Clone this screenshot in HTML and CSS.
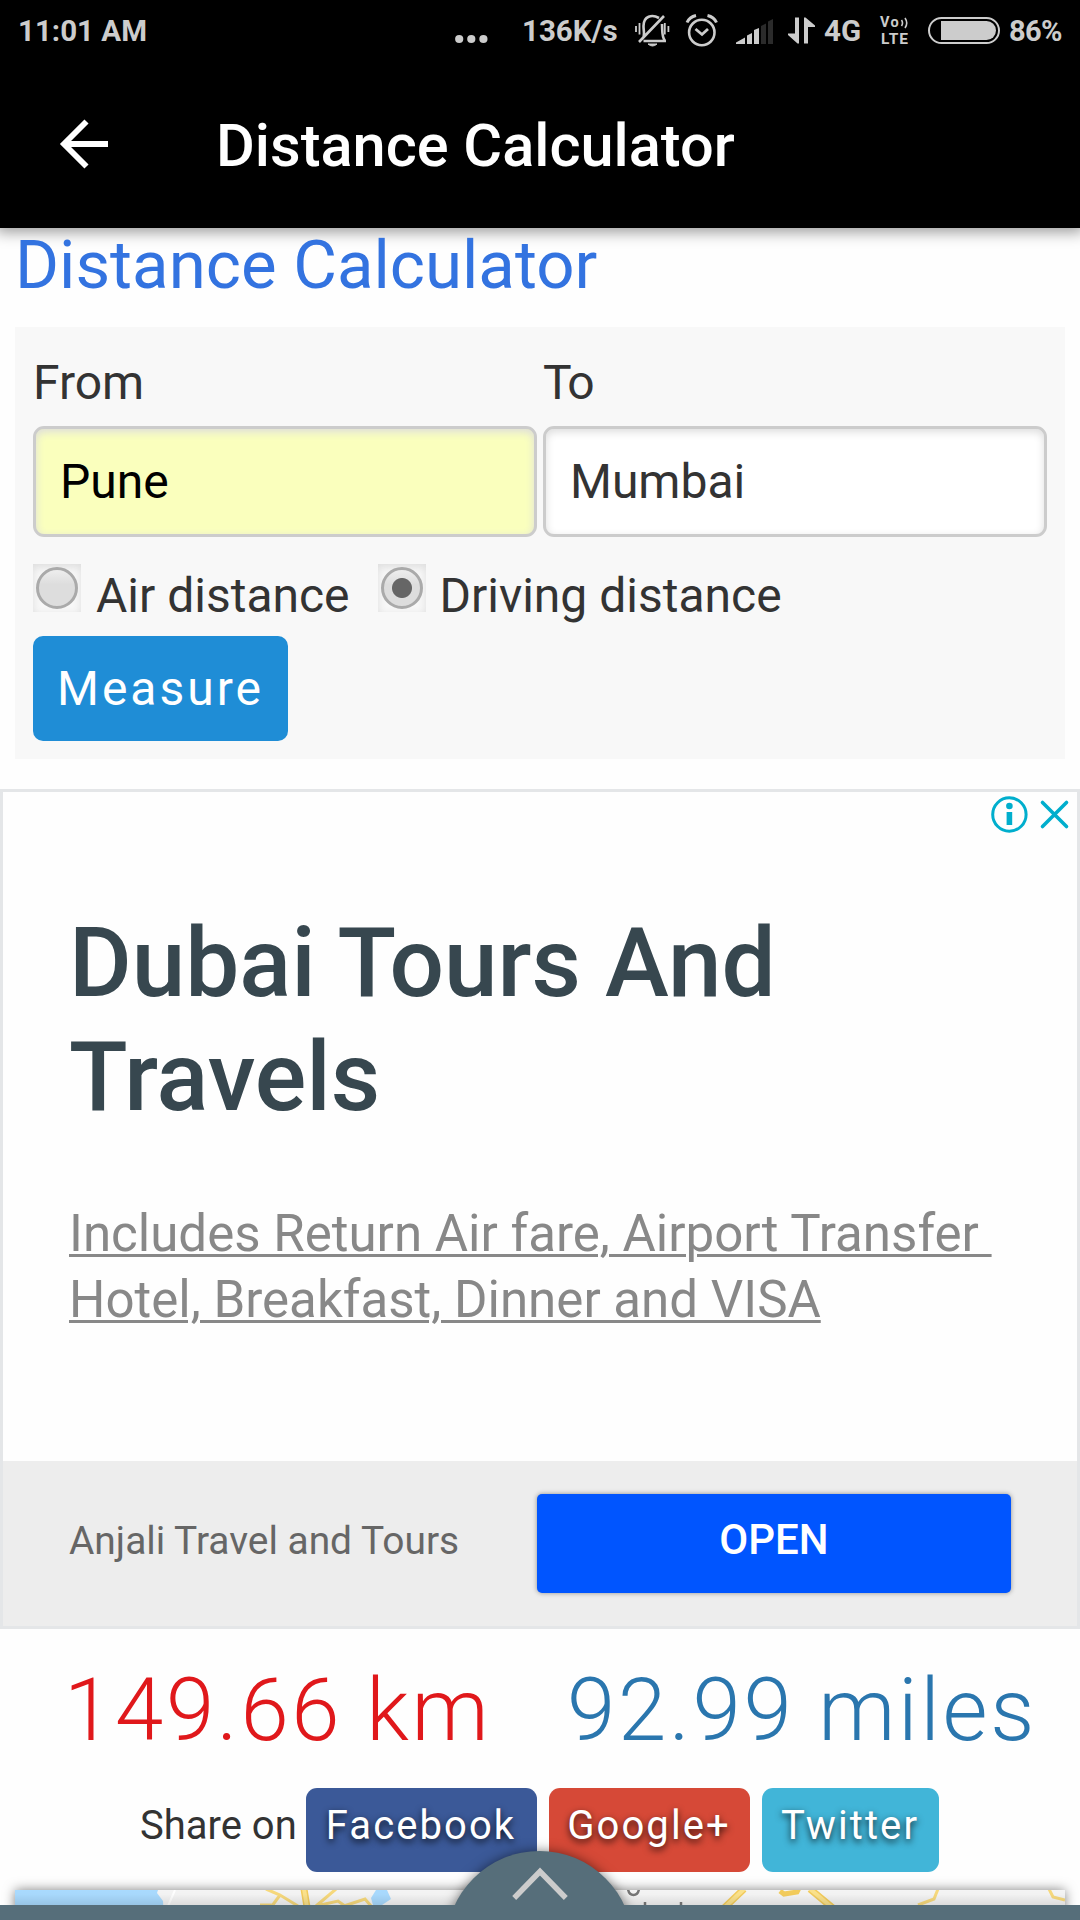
FILE: index.html
```html
<!DOCTYPE html>
<html lang="en">
<head>
<meta charset="utf-8">
<title>Distance Calculator</title>
<link rel="stylesheet" href="styles.css">
</head>
<body>
<div class="screen">
  <header class="top">
    <div class="status">
      <span class="clock">11:01 AM</span>
      <svg class="status-dots" width="34" height="10" viewBox="0 0 34 10"><circle cx="4.2" cy="5" r="4.1"/><circle cx="16.3" cy="5" r="4.1"/><circle cx="28.4" cy="5" r="4.1"/></svg>
      <span class="speed">136K/s</span>
      <svg class="status-icons" width="140" height="34" viewBox="634 13 140 34" fill="none" stroke="#ccc" stroke-width="2.6">
        <path d="M643.500 40H666M643 37C645 34 643.500 30 643.500 25C643.500 15 652 13 659 17M662 23C662.500 31 661.500 35 665 40M639 41L664 15"/>
        <path d="M648 43Q652.500 47 657 43Z" fill="#ccc" stroke-width="1"/>
        <path d="M636 25V31M639.500 22V33.500M664.800 22V33.500M668.400 25V31" stroke-width="1.800"/>
        <circle cx="701.800" cy="31.500" r="12.700"/><path d="M695.500 28L702 33.500L708 28" stroke-width="2.800"/>
        <path d="M687 21.500Q689.500 16 696 14.500M716.500 21.500Q714 16 707.500 14.500" stroke-width="3"/>
        <g stroke="none" fill="#ccc"><path d="M736 43V41.500L745 36.500V43ZM747 43V34.500L752 32V43ZM754 43V29L759 27V43Z"/><path fill="#2b2b2b" d="M761 43V25L766 22.500V43ZM768 43V20.500L773 18V43Z"/></g>
      </svg>
      <svg class="updown" width="28" height="28" viewBox="0 0 28 28" fill="#ccc"><path d="M7 0.500H11V26.500H9.500L0 18V16.500H7ZM16 26.500V0.500H17.500L27 8.500V10H20V26.500Z"/></svg>
      <span class="net">4G</span>
      <span class="volte"><span class="vo">Vo<svg width="9" height="12" viewBox="0 0 9 12" fill="none" stroke="#ccc" stroke-width="1.600"><path d="M1.500 3Q3.500 6 1.500 9M5 1Q8.500 6 5 11"/></svg></span><span class="lte">LTE</span></span>
      <svg class="battery" width="72" height="27" viewBox="0 0 72 27"><rect x="1" y="1" width="70" height="25" rx="12.500" fill="none" stroke="#ccc" stroke-width="2"/><path fill="#ccc" d="M13 4H58.500A9.500 9.500 0 0 1 58.500 23H13Z"/></svg>
      <span class="pct">86%</span>
    </div>
    <div class="appbar">
      <svg class="back" width="50" height="50" viewBox="0 0 50 50" fill="none" stroke="#fff" stroke-width="5.800"><path d="M49 25H5M27.500 2.500L5 25L27.500 47.500"/></svg>
      <span class="apptitle">Distance Calculator</span>
    </div>
  </header>
  <h1 class="heading">Distance Calculator</h1>
  <form class="panel">
    <div class="fields">
      <label class="field">From<input class="box filled" value="Pune"></label>
      <label class="field"><span class="to">To</span><input class="box" value="Mumbai"></label>
    </div>
    <div class="radios">
      <span class="radio"><span class="knob"></span></span><span class="air">Air distance</span>
      <span class="radio"><span class="knob checked"></span></span><span class="drive">Driving distance</span>
    </div>
    <button class="measure" type="button">Measure</button>
  </form>
  <section class="ad">
    <div class="ad-body">
      <svg class="adchoices" width="80" height="38" viewBox="990 795 80 38" fill="none" stroke="#00aecd" stroke-width="3"><circle cx="1009.400" cy="814.500" r="16.700"/><path stroke-width="3.600" stroke-linecap="round" d="M1042.500 802.500L1066.500 826.500M1066.500 802.500L1042.500 826.500"/><g fill="#00aecd" stroke="none"><circle cx="1009.400" cy="806" r="3.300"/><rect x="1006.600" y="812" width="5.600" height="13"/></g></svg>
      <h2 class="ad-title">Dubai Tours And<br>Travels</h2>
      <p class="ad-text">Includes Return Air fare, Airport Transfer <br>Hotel, Breakfast, Dinner and VISA</p>
    </div>
    <div class="ad-foot"><span class="ad-owner">Anjali Travel and Tours</span><a class="ad-open">OPEN</a></div>
  </section>
  <div class="result"><span class="km">149.66 km</span><span class="miles">92.99 miles</span></div>
  <div class="share"><span class="share-label">Share on</span><a class="btn fb">Facebook</a><a class="btn gp">Google+</a><a class="btn tw">Twitter</a></div>
  <div class="map">
    <svg width="1050" height="30" viewBox="15 1890 1050 30" fill="none">
      <defs><linearGradient id="shade" x1="0" y1="0" x2="0" y2="1"><stop offset="0" stop-opacity="0"/><stop offset=".15" stop-opacity=".01"/><stop offset=".5" stop-opacity=".1"/></linearGradient></defs>
      <rect x="15" y="1890" width="1050" height="30" fill="#f4f4f4"/>
      <path fill="#a9dafe" d="M15 1890H158L157 1893L163 1901L164 1920H15ZM376 1890H387L391 1899L382 1905H373L371 1898Z"/>
      <path stroke="#fff" stroke-width="2" d="M175 1890L168 1906"/>
      <path stroke="#f7d97c" stroke-width="3" d="M266 1889L280 1895L298 1906M280 1895L272 1906M260 1905H274M336 1889L316 1906L338 1901L345 1906M344 1906L365 1899L371 1906M1049 1889L1053 1897L1065 1900M938 1889L934 1899L918 1905"/>
      <path stroke="#f3cc5c" stroke-width="7" d="M304 1889L307 1907M744 1889L723 1909M810 1889L834 1909"/>
      <path stroke="#f3cc5c" stroke-width="5" d="M780 1891L784 1894L797 1892L799 1888"/>
      <path stroke="#fbe28c" stroke-width="4" d="M304 1889L307 1907M744 1889L723 1909M810 1889L834 1909"/>
      <path stroke="#777" stroke-width="2.500" d="M628 1889Q629 1895 633.500 1895Q638 1895 639 1889M645 1902V1908M681 1902V1908"/>
      <rect x="15" y="1890" width="1050" height="30" fill="url(#shade)"/>
    </svg>
  </div>
  <div class="drawer"><svg width="60" height="40" viewBox="510 1860 60 40" fill="none" stroke="#ccc" stroke-width="5.500"><path d="M514.200 1898L540 1871.500L565.800 1898"/></svg></div>
  <div class="bar"></div>
</div>
</body>
</html>
```
FILE: styles.css
```css
* { box-sizing: border-box; }
body { margin: 0; background: #fff; font-family: Roboto, "Liberation Sans", sans-serif; color: #333; }
.screen { position: relative; width: 1080px; height: 1920px; overflow: hidden; display: flex; flex-direction: column; background: #fefefe; }
svg { display: block; flex: none; }
.top { flex: none; height: 228px; background: #000; box-shadow: 0 0 14px 4px rgba(0,0,0,.4); color: #ccc; }
.status { display: flex; height: 61px; align-items: center; font-weight: 700; font-size: 29.5px; white-space: nowrap; }
.clock { margin-left: 18px; width: 437px; }
.status-dots { fill: #ccc; margin-top: 17px; width: 34px; }
.speed { margin-left: 33px; width: 112px; }
.updown { margin-left: 14px; }
.net { margin-left: 8px; width: 36px; }
.volte { margin-left: 20px; width: 31px; margin-top: 2px; display: flex; flex-direction: column; }
.vo { display: flex; font-size: 14.5px; line-height: 12px; letter-spacing: 1.4px; height: 15px; }
.lte { font-size: 15.5px; line-height: 14px; height: 14px; letter-spacing: 1px; padding-left: 1px; }
.battery { margin-left: 17px; }
.pct { margin-left: 9px; font-size: 29px; letter-spacing: -.6px; }
.appbar { display: flex; align-items: center; height: 167px; }
.back { margin: 0 0 1px 59px; }
.apptitle { margin: 3px 0 0 107px; font-size: 59.5px; font-weight: 500; color: #fff; line-height: 80px; }
.heading { margin: 0 0 0 15px; height: 99px; font-size: 67.2px; line-height: 74px; font-weight: 400; color: #3373e0; flex: none; }
.panel { flex: none; margin: 0 15px; padding: 31px 18px 0; height: 432px; background: #f8f8f8; font-size: 48px; }
.fields { display: grid; grid-template-columns: 504px 504px; gap: 6px; }
.field { display: flex; flex-direction: column; line-height: 50px; gap: 18px; }
.to { letter-spacing: -2px; }
.box { height: 111px; width: 504px; border: 3px solid #ccc; border-radius: 11px; padding: 0 24px; font: 48px Roboto, sans-serif; color: #333; background: #fff; box-shadow: inset 0 3px 9px #ddd; }
.filled { background: #faffbd; color: #000; }
.radios { display: flex; margin-top: 27px; height: 72px; line-height: 64px; }
.radio { width: 48px; height: 48px; padding: 3px; box-shadow: inset 0 3px 9px #ddd; }
.knob { display: block; width: 42px; height: 42px; border-radius: 50%; border: 3px solid #aaa; background: linear-gradient(#eee, #ddd 40%); }
.checked { background: radial-gradient(circle, #666 9.5px, transparent 10.5px), linear-gradient(#eee, #ddd 40%); }
.air { margin-left: 15px; width: 282px; }
.drive { margin-left: 13.5px; }
.measure { display: block; width: 255px; height: 105px; border: 0; border-radius: 10px; background: #1f8dd6; color: #fff; font: 48px Roboto, sans-serif; letter-spacing: 3px; padding: 0; }
.ad { flex: none; margin-top: 30px; height: 840px; border: 3px solid #e4e6e8; background: #fefefe; display: flex; flex-direction: column; }
.ad-body { height: 669px; padding: 3px 7px 0 66px; }
.adchoices { margin-left: auto; }
.ad-title { margin: 73px 0 0; font-size: 96.2px; line-height: 114px; font-weight: 500; color: #37474f; }
.ad-text { margin: 67px 0 0; font-size: 51.05px; line-height: 66px; color: #888; white-space: pre; text-decoration: underline; text-decoration-thickness: 3px; text-underline-offset: 3px; }
.ad-foot { height: 165px; background: #ededed; display: flex; align-items: center; }
.ad-owner { margin: 0 0 6px 66px; width: 468px; font-size: 38.9px; color: #666; }
.ad-open { width: 474px; height: 99px; border-radius: 5px; background: #0055ff; color: #fff; font-size: 42px; font-weight: 500; line-height: 92px; text-align: center; box-shadow: 0 0 5px rgba(0,0,0,.4); }
.result { display: flex; height: 159px; font-size: 87px; font-weight: 300; letter-spacing: 2.7px; line-height: 102px; padding-top: 30px; white-space: nowrap; flex: none; }
.km { margin-left: 64px; width: 503px; color: #e0181b; }
.miles { color: #2a76ae; }
.share { display: flex; height: 102px; font-size: 40px; line-height: 76px; flex: none; white-space: nowrap; }
.share-label { margin-left: 140px; width: 166px; }
.btn { height: 84px; border-radius: 11px; color: #fff; letter-spacing: 2.1px; text-align: center; text-shadow: 0 3px 7px rgba(0,0,0,.8); padding-right: 1px; }
.fb { width: 231px; background: #3b5998; }
.gp { width: 201px; margin-left: 12px; background: #d64937; }
.tw { width: 177px; margin-left: 12px; background: #41b5d8; }
.map { margin-left: 15px; width: 1050px; height: 30px; box-shadow: 0 0 12px rgba(0,0,0,.5); flex: none; }
.drawer { position: absolute; left: 446px; top: 1851px; width: 187px; height: 187px; border-radius: 50%; background: #566e7a; box-shadow: 0 0 12px rgba(0,0,0,.5); padding: 9px 0 0 64px; }
.bar { position: absolute; left: 0; top: 1905px; width: 1080px; height: 15px; background: #566e7a; }
```
